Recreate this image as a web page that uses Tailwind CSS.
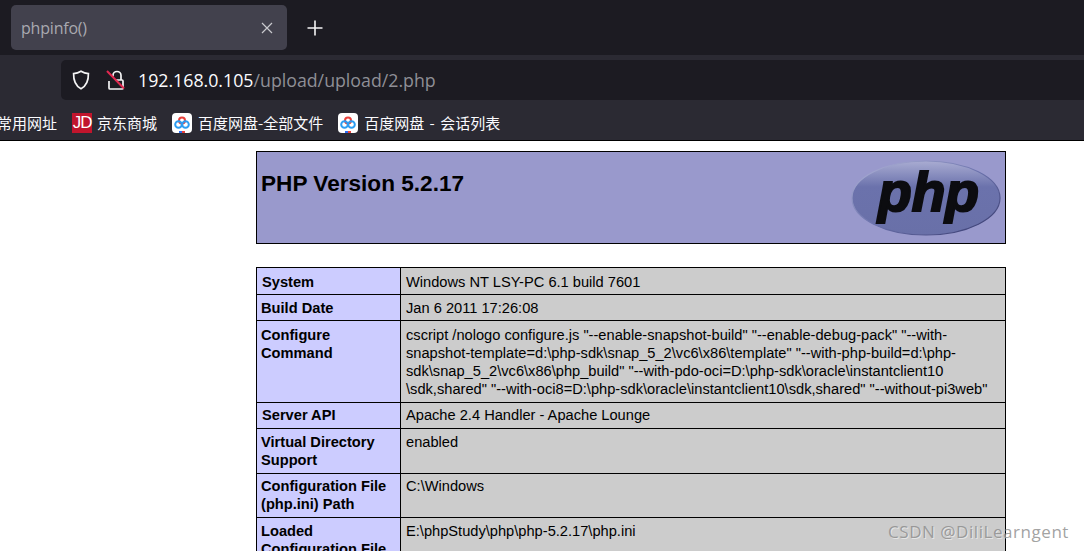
<!DOCTYPE html>
<html lang="en">
<head>
  <meta charset="UTF-8" />
  <title>phpinfo()</title>
  <script src="https://cdn.jsdelivr.net/npm/@tailwindcss/browser@4"></script>
</head>
<body class="relative h-[551px] overflow-hidden bg-white font-['Liberation_Sans',sans-serif]">

  <!-- Tab strip -->
  <div class="flex h-[55px] items-start bg-[#1c1b22] pl-[11px] pt-[5px] font-['Open_Sans','Noto_Sans_CJK_SC',sans-serif]">
    <div class="flex h-[45px] w-[276px] items-center justify-between rounded-[5px] bg-[#42414d] pl-[10px] pr-[14px]">
      <span class="text-[16px] tracking-[-0.2px] text-[#a9a9b0]">phpinfo()</span>
      <svg class="h-[12px] w-[12px]" viewBox="0 0 12 12" fill="none" stroke="#c9c9ce" stroke-width="1.2"><path d="M1 1l10 10M11 1L1 11"/></svg>
    </div>
    <svg class="ml-[20px] mt-[15px] h-[16px] w-[16px]" viewBox="0 0 16 16" fill="none" stroke="#f4f4f5" stroke-width="1.6"><path d="M8 0.500v15M0.500 8h15"/></svg>
  </div>

  <!-- Toolbar -->
  <div class="flex h-[50px] items-start bg-[#2b2a33] pl-[61px] pt-[5px] font-['Open_Sans','Noto_Sans_CJK_SC',sans-serif]">
    <div class="flex h-[40px] flex-1 items-center rounded-l-[5px] bg-[#1c1b22] pl-[11px]">
      <svg class="h-[20px] w-[18px]" viewBox="0 0 18 20" fill="none" stroke="#f4f4f5" stroke-width="1.7"><path d="M9 1.200c2.400 1.500 4.600 2.200 7.400 2.400c.2 7.200-1.800 12.300-7.400 15.200C3.400 15.900 1.400 10.800 1.600 3.600C4.400 3.400 6.600 2.700 9 1.200z"/></svg>
      <svg class="ml-[15px] h-[20px] w-[20px]" viewBox="0 0 20 20" fill="none" stroke-width="1.7"><path stroke="#f4f4f5" d="M8 6.500V5.500a4 4 0 0 1 8 0V10M4 11v7a1 1 0 0 0 1 1h12a1 1 0 0 0 1-1V11a1 1 0 0 0-1-1H10"/><path stroke="#e22850" stroke-width="2" d="M2 1l17 17.500"/></svg>
      <span class="ml-[13px] mt-[1px] text-[17.750px] leading-none text-[#fbfbfe]">192.168.0.105<span class="text-[#8f8f96]">/upload/upload/2.php</span></span>
    </div>
  </div>

  <!-- Bookmarks -->
  <div class="flex h-[36px] items-start overflow-hidden border-b border-black bg-[#2b2a33] pt-[8px] text-[15px] leading-[20px] text-[#fbfbfe] font-['Noto_Sans_CJK_SC','Open_Sans',sans-serif]">
    <span class="ml-[-3px] whitespace-nowrap">常用网址</span>
    <div class="ml-[15px] flex h-[20px] w-[20px] items-center justify-center bg-[#c1152d] text-[17px] tracking-[-1px] text-white font-['Liberation_Sans',sans-serif]">JD</div>
    <span class="ml-[5px] whitespace-nowrap">京东商城</span>
    <svg class="ml-[15px] h-[20px] w-[20px]" viewBox="0 0 20 20" fill="none"><rect width="20" height="20" rx="4" fill="#fff"/><circle cx="10" cy="7.500" r="3" stroke="#e8413c" stroke-width="2"/><circle cx="6.500" cy="11.500" r="3.300" stroke="#2b9cf2" stroke-width="2"/><circle cx="13.500" cy="11.500" r="3.300" stroke="#2b9cf2" stroke-width="2"/><rect x="7" y="18" width="3" height="2" fill="#2b6cf2"/><rect x="10" y="18" width="3" height="2" fill="#e8413c"/></svg>
    <span class="ml-[6px] whitespace-nowrap">百度网盘-全部文件</span>
    <svg class="ml-[15px] h-[20px] w-[20px]" viewBox="0 0 20 20" fill="none"><rect width="20" height="20" rx="4" fill="#fff"/><circle cx="10" cy="7.500" r="3" stroke="#e8413c" stroke-width="2"/><circle cx="6.500" cy="11.500" r="3.300" stroke="#2b9cf2" stroke-width="2"/><circle cx="13.500" cy="11.500" r="3.300" stroke="#2b9cf2" stroke-width="2"/><rect x="7" y="18" width="3" height="2" fill="#2b6cf2"/><rect x="10" y="18" width="3" height="2" fill="#e8413c"/></svg>
    <span class="ml-[6px] whitespace-nowrap [word-spacing:2px]">百度网盘 - 会话列表</span>
  </div>

  <!-- phpinfo page -->
  <main class="ml-[256px] w-[750px] pt-[10px] text-[14.650px] leading-[18px] text-black">
    <div class="flex h-[93px] justify-between border border-black bg-[#9999cc]">
      <h1 class="pl-[4px] pt-[18px] text-[22.600px] leading-[28px] font-bold">PHP Version 5.2.17</h1>
      <svg class="mr-[4px] mt-[7px] h-[78px] w-[150px]" viewBox="0 0 150 78">
        <defs>
          <linearGradient id="oval" x1="0" y1="0" x2="0" y2="1">
            <stop offset="0" stop-color="#a9acd2"/>
            <stop offset="0.350" stop-color="#6b72ac"/>
            <stop offset="1" stop-color="#6970a8"/>
          </linearGradient>
          <linearGradient id="rim" x1="0" y1="0" x2="1" y2="1">
            <stop offset="0" stop-color="#b4b7da"/>
            <stop offset="0.500" stop-color="#6b72ac"/>
            <stop offset="1" stop-color="#33366a"/>
          </linearGradient>
        </defs>
        <ellipse cx="75" cy="39" rx="74" ry="37" fill="url(#oval)" stroke="url(#rim)" stroke-width="1.200"/>
        <text x="27" y="52" textLength="101" lengthAdjust="spacingAndGlyphs" font-family="Liberation Sans" font-size="56" font-weight="bold" font-style="italic" fill="#0c0c10" stroke="#0c0c10" stroke-width="2.200">php</text>
      </svg>
    </div>

    <table class="mt-[23px] w-[750px] table-fixed border-collapse border border-black">
      <colgroup><col class="w-[144px]" /><col /></colgroup>
      <tbody>
        <tr class="h-[27px]">
          <td class="border border-black bg-[#ccccff] px-[5px] pt-[2px] align-middle font-bold">System</td>
          <td class="border border-black bg-[#cccccc] px-[5px] pt-[2px] align-middle">Windows NT LSY-PC 6.1 build 7601</td>
        </tr>
        <tr class="h-[26px]">
          <td class="border border-black bg-[#ccccff] px-[4px] align-middle font-bold">Build Date</td>
          <td class="border border-black bg-[#cccccc] px-[5px] align-middle">Jan 6 2011 17:26:08</td>
        </tr>
        <tr class="h-[82px]">
          <td class="border border-black bg-[#ccccff] px-[4px] pt-[5px] align-top font-bold">Configure<br />Command</td>
          <td class="border border-black bg-[#cccccc] px-[5px] pt-[5px] align-top whitespace-nowrap">cscript /nologo configure.js "--enable-snapshot-build" "--enable-debug-pack" "--with-<br />snapshot-template=d:\php-sdk\snap_5_2\vc6\x86\template" "--with-php-build=d:\php-<br />sdk\snap_5_2\vc6\x86\php_build" "--with-pdo-oci=D:\php-sdk\oracle\instantclient10<br />\sdk,shared" "--with-oci8=D:\php-sdk\oracle\instantclient10\sdk,shared" "--without-pi3web"</td>
        </tr>
        <tr class="h-[26px]">
          <td class="border border-black bg-[#ccccff] px-[5px] pb-[2px] align-middle font-bold">Server API</td>
          <td class="border border-black bg-[#cccccc] px-[5px] pb-[2px] align-middle">Apache 2.4 Handler - Apache Lounge</td>
        </tr>
        <tr class="h-[45px]">
          <td class="border border-black bg-[#ccccff] px-[4px] pt-[4px] align-top font-bold">Virtual Directory<br />Support</td>
          <td class="border border-black bg-[#cccccc] px-[5px] pt-[4px] align-top">enabled</td>
        </tr>
        <tr class="h-[44px]">
          <td class="border border-black bg-[#ccccff] px-[4px] pt-[3px] align-top font-bold">Configuration File<br />(php.ini) Path</td>
          <td class="border border-black bg-[#cccccc] px-[5px] pt-[3px] align-top">C:\Windows</td>
        </tr>
        <tr class="h-[44px]">
          <td class="border border-black bg-[#ccccff] px-[4px] pt-[4px] align-top font-bold">Loaded<br />Configuration File</td>
          <td class="border border-black bg-[#cccccc] px-[5px] pt-[4px] align-top">E:\phpStudy\php\php-5.2.17\php.ini</td>
        </tr>
      </tbody>
    </table>
  </main>

  <!-- Watermark -->
  <div class="absolute left-[888px] top-[522px] text-[17px] leading-[20px] tracking-[0.55px] text-[#8a8a8a]/80 [text-shadow:1px_1px_0_rgba(255,255,255,0.5)] font-['Open_Sans',sans-serif]">CSDN @DiliLearngent</div>
</body>
</html>
